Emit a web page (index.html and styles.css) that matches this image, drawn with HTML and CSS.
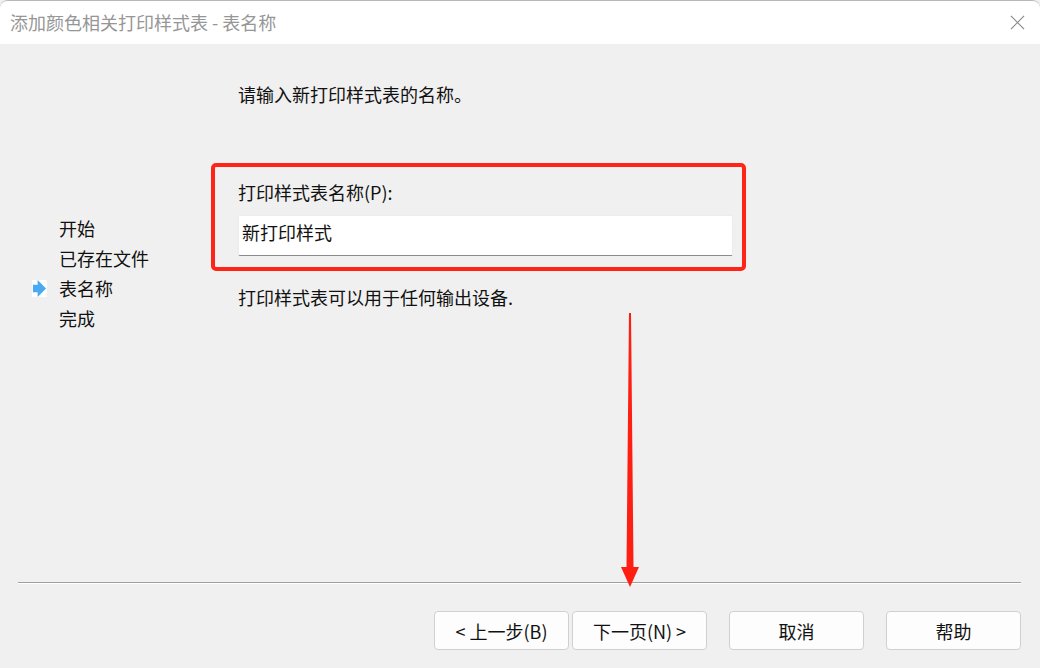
FILE: index.html
```html
<!DOCTYPE html>
<html lang="zh-CN">
<head>
    <meta charset="UTF-8">
    <title>添加颜色相关打印样式表 - 表名称</title>
    <link rel="stylesheet" href="styles.css">
</head>
<body>
    <div class="window">
        <div class="titlebar">
            <span class="title">添加颜色相关打印样式表 - 表名称</span>
            <svg class="close" width="16" height="16" viewBox="0 0 16 16">
                <path d="M1 1 L15 15 M15 1 L1 15" stroke="#8a8a8a" stroke-width="1.3" fill="none"/>
            </svg>
        </div>

        <div class="content">
            <ul class="steps">
                <li><span class="marker"></span>开始</li>
                <li><span class="marker"></span>已存在文件</li>
                <li class="current">
                    <span class="marker">
                        <svg width="16" height="18" viewBox="0 0 16 18">
                            <rect x="0" y="0" width="16" height="18" fill="#fff"/>
                            <rect x="1" y="5" width="6" height="8" fill="#4ba9f2"/>
                            <polygon points="6,0 15,9 6,18" fill="#4ba9f2"/>
                        </svg>
                    </span>表名称
                </li>
                <li><span class="marker"></span>完成</li>
            </ul>

            <div class="page">
                <p class="intro">请输入新打印样式表的名称。</p>
                <div class="field">
                    <label class="field-label" for="styleName">打印样式表名称(P):</label>
                    <input class="field-input" id="styleName" type="text" value="新打印样式">
                </div>
                <p class="note">打印样式表可以用于任何输出设备.</p>
            </div>
        </div>

        <div class="footer">
            <div class="buttons">
                <div class="nav-pair">
                    <button class="btn">&lt; 上一步(B)</button>
                    <button class="btn">下一页(N) &gt;</button>
                </div>
                <button class="btn">取消</button>
                <button class="btn">帮助</button>
            </div>
        </div>

        <!-- annotations drawn over the dialog -->
        <div class="mark-box"></div>
        <svg class="mark-arrow" width="24" height="276" viewBox="0 0 24 276">
            <polygon points="11,0 13,0 15.5,254 21,254 12,274 3,254 8.5,254" fill="#ff1f12"/>
        </svg>
    </div>
</body>
</html>
```

FILE: styles.css
```css
body {
    margin: 0;
    background-color: #f0f0f0;
    font-family: "Microsoft YaHei", "Noto Sans CJK SC", "Noto Sans", sans-serif;
    font-size: 18px;
    color: #111;
}
.window {
    position: relative;
    width: 1040px;
    height: 668px;
    display: flex;
    flex-direction: column;
    background-color: #f0f0f0;
    box-sizing: border-box;
    border-top: 1px solid #b8b8b8;
    border-radius: 8px 8px 0 0;
    overflow: hidden;
}
.titlebar {
    height: 43px;
    background-color: #fff;
    display: flex;
    align-items: center;
    justify-content: space-between;
    padding: 0 15px 0 10px;
}
.title {
    color: #969696;
    font-size: 18px;
    line-height: 43px;
}
.close {
    width: 15px;
    height: 15px;
}
.content {
    flex: 1;
    display: flex;
}
.steps {
    list-style: none;
    margin: 0;
    padding: 169px 0 0 32px;
    width: 206px;
}
.steps li {
    display: flex;
    align-items: center;
    height: 30px;
    line-height: 30px;
}
.marker {
    width: 27px;
    display: flex;
    align-items: center;
}
.marker svg {
    width: 15px;
    height: 17px;
}
.page {
    flex: 1;
    padding-top: 35px;
}
.intro {
    margin: 0;
    line-height: 30px;
}
.field {
    margin-top: 68px;
    width: 495px;
}
.field-label {
    display: block;
    line-height: 30px;
}
.field-input {
    display: block;
    box-sizing: border-box;
    width: 495px;
    height: 41px;
    margin-top: 8px;
    padding: 0 3px 8px;
    border: 1px solid #ececec;
    border-bottom: 1px solid #8a8a8a;
    border-radius: 2px;
    background-color: #fff;
    font-family: inherit;
    font-size: 18px;
    color: #111;
    outline: none;
}
.note {
    margin: 26px 0 0;
    line-height: 30px;
}
.footer {
    height: 86px;
    margin: 0 19px 0 18px;
    border-top: 1px solid #a0a0a0;
    box-shadow: inset 0 1px 0 #fff;
    box-sizing: border-box;
}
.buttons {
    display: flex;
    justify-content: flex-end;
    gap: 22px;
    padding-top: 28px;
}
.nav-pair {
    display: flex;
    gap: 3px;
}
.btn {
    width: 135px;
    height: 39px;
    background-color: #fdfdfd;
    border: 1px solid #d0d0d0;
    border-radius: 4px;
    font-family: inherit;
    font-size: 18px;
    color: #111;
    padding: 0;
}
.mark-box {
    position: absolute;
    left: 211px;
    top: 162px;
    width: 535px;
    height: 108px;
    box-sizing: border-box;
    border: 4px solid #ff2418;
    border-radius: 5px;
}
.mark-arrow {
    position: absolute;
    left: 618px;
    top: 312px;
}
```
